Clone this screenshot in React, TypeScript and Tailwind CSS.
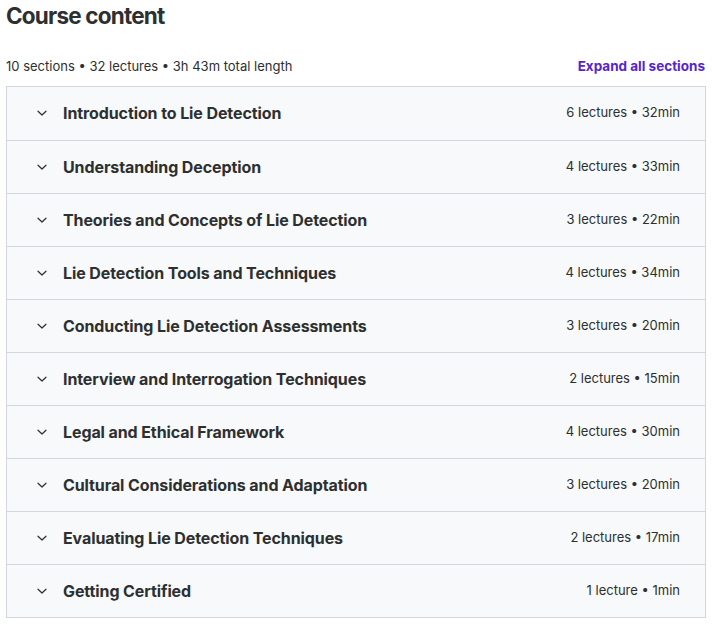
import React from "react";

const sections = [
  { title: "Introduction to Lie Detection", meta: "6 lectures • 32min" },
  { title: "Understanding Deception", meta: "4 lectures • 33min" },
  { title: "Theories and Concepts of Lie Detection", meta: "3 lectures • 22min" },
  { title: "Lie Detection Tools and Techniques", meta: "4 lectures • 34min" },
  { title: "Conducting Lie Detection Assessments", meta: "3 lectures • 20min" },
  { title: "Interview and Interrogation Techniques", meta: "2 lectures • 15min" },
  { title: "Legal and Ethical Framework", meta: "4 lectures • 30min" },
  { title: "Cultural Considerations and Adaptation", meta: "3 lectures • 20min" },
  { title: "Evaluating Lie Detection Techniques", meta: "2 lectures • 17min" },
  { title: "Getting Certified", meta: "1 lecture • 1min" },
];

function Chevron() {
  return (
    <svg width="12" height="12" viewBox="0 0 12 12" fill="none" className="text-[#2d2f31]">
      <path d="M2 4.2 L6 8 L10 4.2" stroke="currentColor" strokeWidth="1.2" strokeLinecap="round" strokeLinejoin="round" />
    </svg>
  );
}

export default function App() {
  return (
    <div className="w-[712px] h-[625px] bg-white text-[#2d2f31] font-['Inter',sans-serif] px-[6px] overflow-hidden">
      <h2 className="text-[22.5px] font-bold leading-none pt-[5px] tracking-[-0.8px]">Course content</h2>
      <div className="flex items-center justify-between mt-[28px] pr-[1px] text-[13px] leading-[20px]">
        <span>10 sections • 32 lectures • 3h 43m total length</span>
        <button className="font-bold text-[#5624d0] text-[13.5px]">Expand all sections</button>
      </div>
      <div className="mt-[10px] w-[700px] border border-[#d1d7dc]">
        {sections.map((s, i) => (
          <div
            key={s.title}
            className={`flex items-center h-[53px] bg-[#f7f9fa] pl-[29px] pr-[25px] ${i > 0 ? "border-t border-[#d1d7dc]" : ""}`}
          >
            <Chevron />
            <span className="ml-[15px] font-bold text-[16px] tracking-[-0.1px]">{s.title}</span>
            <span className="ml-auto text-[13px]">{s.meta}</span>
          </div>
        ))}
      </div>
    </div>
  );
}
